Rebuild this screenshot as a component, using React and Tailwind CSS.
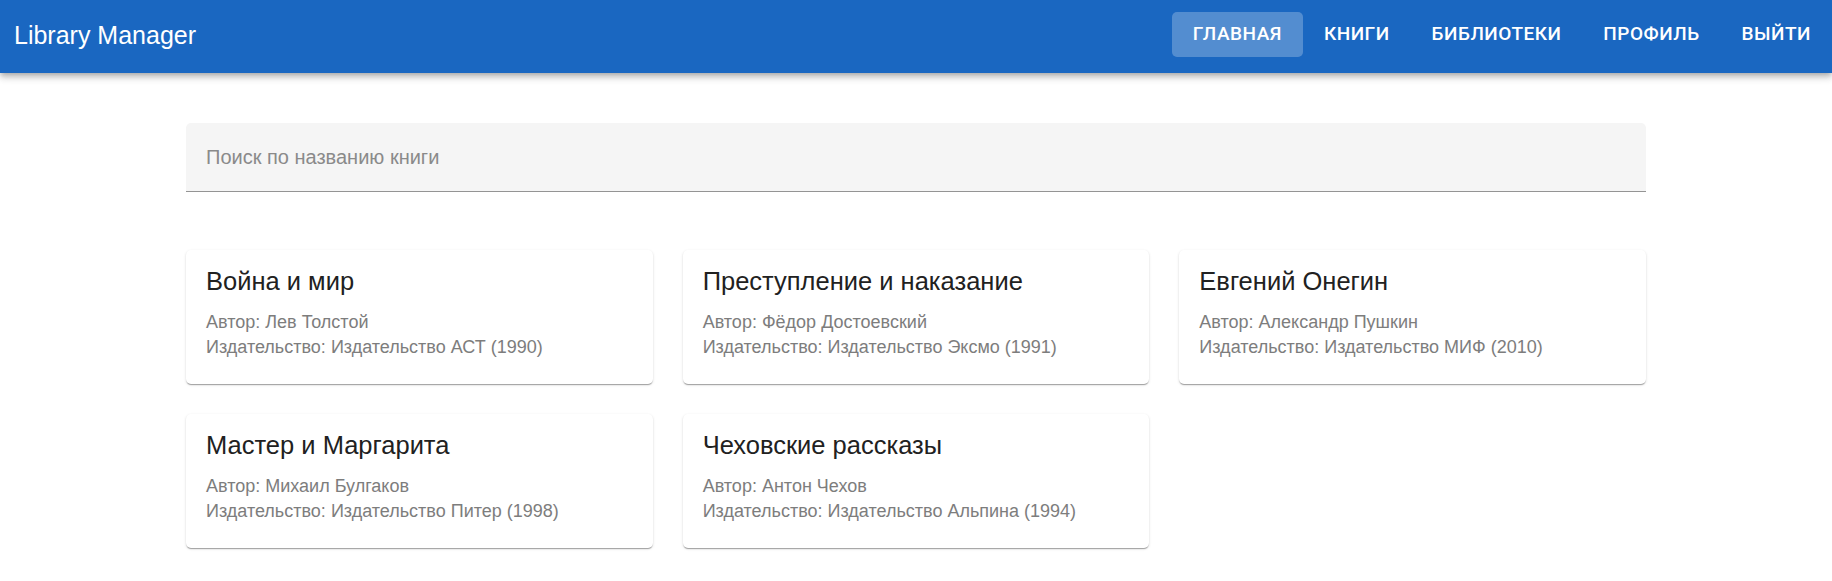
import React from "react";

const books = [
  { title: "Война и мир", author: "Лев Толстой", publisher: "Издательство АСТ", year: 1990 },
  { title: "Преступление и наказание", author: "Фёдор Достоевский", publisher: "Издательство Эксмо", year: 1991 },
  { title: "Евгений Онегин", author: "Александр Пушкин", publisher: "Издательство МИФ", year: 2010 },
  { title: "Мастер и Маргарита", author: "Михаил Булгаков", publisher: "Издательство Питер", year: 1998 },
  { title: "Чеховские рассказы", author: "Антон Чехов", publisher: "Издательство Альпина", year: 1994 },
];

const nav = ["ГЛАВНАЯ", "КНИГИ", "БИБЛИОТЕКИ", "ПРОФИЛЬ", "ВЫЙТИ"];

export default function App() {
  return (
    <div className="min-h-[581px] bg-white font-['Liberation_Sans',Arial,sans-serif]">
      <header className="relative z-10 flex h-[73px] items-center justify-between bg-[#1a67c1] pb-[4px] pl-[14px] shadow-[0_2px_5px_-1px_rgba(0,0,0,0.2),0_5px_6px_0_rgba(0,0,0,0.14),0_1px_12px_0_rgba(0,0,0,0.12)]">
        <div className="text-[25px] leading-[40px] text-white">Library Manager</div>
        <nav className="flex items-center">
          {nav.map((item, i) => (
            <button
              key={item}
              className={
                "h-[45px] rounded-[5px] px-[21px] font-['Roboto',sans-serif] text-[19px] font-medium tracking-[0.5px] text-white " +
                (i === 0 ? "bg-white/25" : "bg-transparent")
              }
            >
              {item}
            </button>
          ))}
        </nav>
      </header>

      <main className="mx-auto w-[1460px] pt-[50px]">
        <div className="flex h-[69px] items-center rounded-t-[5px] border-b border-[#949494] bg-[#f5f5f5] px-[20px]">
          <span className="text-[20px] text-[#8a8a8a]">Поиск по названию книги</span>
        </div>

        <div className="mt-[58px] grid grid-cols-3 gap-[30px]">
          {books.map((b) => (
            <div
              key={b.title}
              className="h-[134px] rounded-[5px] bg-white px-[20px] pt-[15px] shadow-[0_2px_1px_-1px_rgba(0,0,0,0.2),0_1px_1px_0_rgba(0,0,0,0.14),0_1px_3px_0_rgba(0,0,0,0.12)]"
            >
              <div className="text-[25.5px] leading-[32px] text-[#212121]">{b.title}</div>
              <div className="mt-[13px] text-[18px] leading-[25px] text-[#7d7d7d]">
                <div>Автор: {b.author}</div>
                <div>
                  Издательство: {b.publisher} ({b.year})
                </div>
              </div>
            </div>
          ))}
        </div>
      </main>
    </div>
  );
}
